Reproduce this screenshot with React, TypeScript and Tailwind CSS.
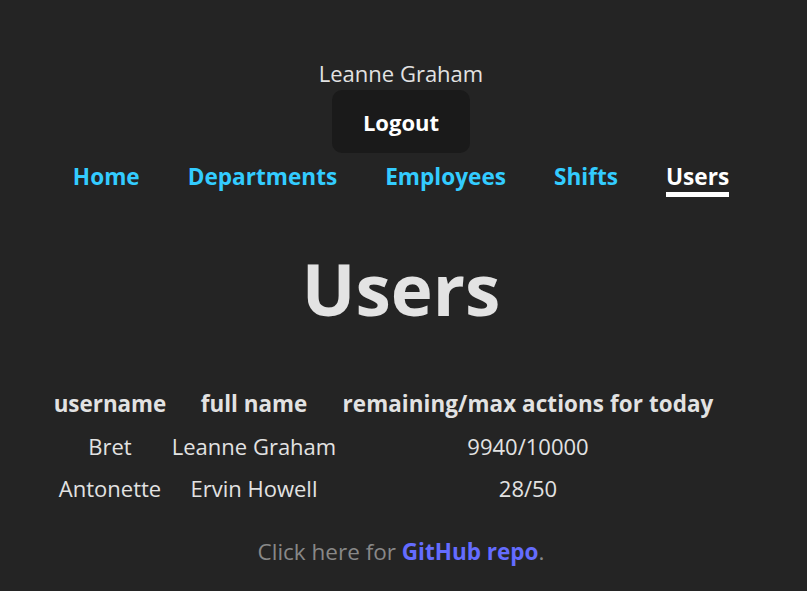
import React from "react";

const font = { fontFamily: '"Open Sans", "Noto Sans", sans-serif' };

export default function App() {
  const rows = [
    ["Bret", "Leanne Graham", "9940/10000"],
    ["Antonette", "Ervin Howell", "28/50"],
  ];
  return (
    <div
      className="min-h-[591px] w-full bg-[#242424] text-[#e2e2e2] flex flex-col items-center pt-[60px] pr-[5px]"
      style={font}
    >
      <div className="h-[26px] leading-[26px] text-[22px]">Leanne Graham</div>
      <button className="mt-[4px] h-[63px] w-[138px] rounded-[10px] bg-[#1a1a1a] pt-[2px] text-[22px] font-bold text-white">
        Logout
      </button>
      <nav className="mt-[9px] flex gap-[48px] text-[22.6px] font-bold">
        {["Home", "Departments", "Employees", "Shifts"].map((n) => (
          <a
            key={n}
            className="block h-[35px] leading-[30px] border-b-[5px] border-transparent text-[#33ccff]"
          >
            {n}
          </a>
        ))}
        <a className="block h-[35px] leading-[30px] border-b-[5px] border-white text-white">
          Users
        </a>
      </nav>
      <h1 className="mt-[52px] h-[80px] leading-[80px] text-[71px] font-bold text-[#e3e3e3]">
        Users
      </h1>
      <div className="mt-[54px] w-full pl-[51px] text-[22px]">
        <div className="grid grid-cols-[118px_170px_378px] text-center">
          <div className="h-[42px] leading-[42px] font-bold text-[22.4px]">username</div>
          <div className="h-[42px] leading-[42px] font-bold text-[22.4px]">full name</div>
          <div className="h-[42px] leading-[42px] font-bold text-[22.6px] tracking-[0.03px]">
            <span className="text-[22.4px] tracking-[0.1px]">remaining/max actions for today</span>
          </div>
          {rows.map((r) =>
            r.map((c, i) => (
              <div key={r[0] + i} className="h-[42px] leading-[42px]">
                {c}
              </div>
            ))
          )}
        </div>
      </div>
      <p className="mt-[28px] h-[30px] leading-[30px] text-[22.5px] text-[#888888]">
        Click here for <a className="font-bold text-[#646cff]">GitHub repo</a>.
      </p>
    </div>
  );
}
